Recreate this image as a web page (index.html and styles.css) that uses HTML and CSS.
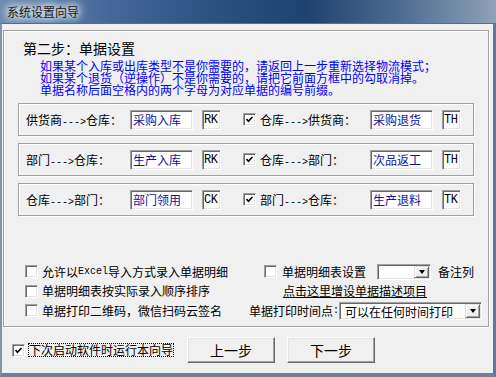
FILE: index.html
```html
<!DOCTYPE html>
<html lang="zh-CN">
<head>
<meta charset="UTF-8" />
<title>系统设置向导</title>
<link rel="stylesheet" href="styles.css">
</head>
<body>
  <div class="window">
    <div class="titlebar"><span class="title">系统设置向导</span></div>
    <div class="client">
      <div class="group main">
        <div class="step">第二步：单据设置</div>
        <div class="notes">
          <div>如果某个入库或出库类型不是你需要的，请返回上一步重新选择物流模式；</div>
          <div>如果某个退货（逆操作）不是你需要的，请把它前面方框中的勾取消掉。</div>
          <div>单据名称后面空格内的两个字母为对应单据的编号前缀。</div>
        </div>

        <div class="rows">
          <div class="group row">
            <span class="lbl">供货商<span class="arrow">---&gt;</span>仓库：</span>
            <span class="field">采购入库</span>
            <span class="code">RK</span>
            <span class="check on"><svg viewBox="0 0 13 13"><polyline points="3,6 5.2,8.6 10,3.6" /></svg></span>
            <span class="lbl lbl-r">仓库<span class="arrow">---&gt;</span>供货商：</span>
            <span class="field">采购退货</span>
            <span class="code">TH</span>
          </div>
          <div class="group row">
            <span class="lbl">部门<span class="arrow">---&gt;</span>仓库：</span>
            <span class="field">生产入库</span>
            <span class="code">RK</span>
            <span class="check on"><svg viewBox="0 0 13 13"><polyline points="3,6 5.2,8.6 10,3.6" /></svg></span>
            <span class="lbl lbl-r">仓库<span class="arrow">---&gt;</span>部门：</span>
            <span class="field">次品返工</span>
            <span class="code">TH</span>
          </div>
          <div class="group row">
            <span class="lbl">仓库<span class="arrow">---&gt;</span>部门：</span>
            <span class="field">部门领用</span>
            <span class="code">CK</span>
            <span class="check on"><svg viewBox="0 0 13 13"><polyline points="3,6 5.2,8.6 10,3.6" /></svg></span>
            <span class="lbl lbl-r">部门<span class="arrow">---&gt;</span>仓库：</span>
            <span class="field">生产退料</span>
            <span class="code">TK</span>
          </div>
        </div>

        <div class="options">
          <div class="opt"><span class="check"></span>允许以<span class="latin">Excel</span>导入方式录入单据明细</div>
          <div class="opt opt-detail">
            <span class="check"></span>单据明细表设置
            <span class="combo combo-sm"><span class="combo-text"></span><span class="drop"></span></span>
            备注列
          </div>
          <div class="opt"><span class="check"></span>单据明细表按实际录入顺序排序</div>
          <div class="opt opt-link"><a class="link">点击这里增设单据描述项目</a></div>
          <div class="opt"><span class="check"></span>单据打印二维码，微信扫码云签名</div>
          <div class="opt opt-print">
            单据打印时间点<span class="colon">:</span>
            <span class="combo combo-lg"><span class="combo-text">可以在任何时间打印</span><span class="drop"></span></span>
          </div>
        </div>
      </div>

      <div class="footer">
        <span class="check on"><svg viewBox="0 0 13 13"><polyline points="3,6 5.2,8.6 10,3.6" /></svg></span>
        <span class="focus">下次启动软件时运行本向导</span>
        <button class="btn btn-prev">上一步</button>
        <button class="btn">下一步</button>
      </div>
    </div>
  </div>
</body>
</html>
```

FILE: styles.css
```css
* {
  box-sizing: border-box;
}

body {
  margin: 0;
  background: #f0f0f0;
  font-family: "Noto Sans CJK SC", sans-serif;
  font-size: 12px;
  color: #000;
}

.window {
  width: 496px;
  height: 377px;
  display: flex;
  flex-direction: column;
}

/* Заголовок окна в стиле Win7 basic */
.titlebar {
  height: 23px;
  padding-left: 7px;
  display: flex;
  align-items: center;
  background: linear-gradient(90deg, #6f8cae 0%, #45689a 22%, #2a4f7e 45%, #1f436f 62%, #4b6a90 80%, #8ea1b7 100%);
}
.title {
  font-size: 12px;
  line-height: 14px;
  color: #161616;
  text-shadow:
    0 0 6px #e4ebf2,
    0 0 8px #e4ebf2,
    0 0 10px #dfe7ef,
    0 0 12px #dfe7ef;
}

.client {
  flex: 1;
  background: #f0f0f0;
  border-top: 1px solid #5c6d80;
  border-left: 2px solid #8193aa;
  border-right: 3px solid #5f7898;
  border-bottom: 4px solid #6a82a0;
}

/* Рамка group box */
.group {
  border: 1px solid #a0a0a0;
  box-shadow: inset 1px 1px #fff, 1px 1px #fff;
}

.main {
  width: 486px;
  height: 297px;
  margin: 6px 0 0 1px;
  padding: 9px 0 0 14px;
}

.step {
  font-size: 14px;
  line-height: 16px;
  padding-left: 5px;
}

.notes {
  margin-top: 4px;
  padding-left: 22px;
  color: #0000ff;
  line-height: 12px;
}

.rows {
  margin-top: 7px;
  width: 456px;
  display: flex;
  flex-direction: column;
  gap: 7px;
}
.row {
  height: 33px;
  padding-left: 7px;
  display: flex;
  align-items: center;
}
.lbl {
  width: 104px;
  white-space: nowrap;
}
.lbl-r {
  width: 110px;
}
.arrow, .latin, .colon {
  font-family: "Liberation Mono", monospace;
  font-size: 10px;
}

.field {
  width: 63px;
  height: 20px;
  padding-left: 2px;
  line-height: 17px;
  background: #fff;
  color: #12129a;
  border: 1px solid;
  border-color: #a0a0a0 #fff #fff #a0a0a0;
  box-shadow: inset 1px 1px #696969, inset -1px -1px #e3e3e3;
}
.code {
  width: 19px;
  height: 20px;
  margin-left: 9px;
  padding-left: 1px;
  line-height: 18px;
  font-family: "Liberation Mono", monospace;
  font-size: 12px;
  letter-spacing: -0.5px;
  background: #fff;
  border: 1px solid;
  border-color: #a0a0a0 #fff #fff #a0a0a0;
  box-shadow: inset 1px 1px #696969, inset -1px -1px #e3e3e3;
}

/* Чекбокс */
.check {
  flex-shrink: 0;
  display: inline-block;
  width: 13px;
  height: 13px;
  background: #fff;
  border: 1px solid;
  border-color: #a0a0a0 #fff #fff #a0a0a0;
  box-shadow: inset 1px 1px #696969, inset -1px -1px #e3e3e3;
}
.check svg {
  display: block;
  width: 11px;
  height: 11px;
}
.check polyline {
  fill: none;
  stroke: #000;
  stroke-width: 1.9;
}
.row .check {
  margin-left: 22px;
  margin-right: 4px;
}

.options {
  margin: 46px 0 0 7px;
  display: grid;
  grid-template-columns: 224px auto;
  grid-auto-rows: 19.5px;
  align-items: center;
}
.opt {
  display: flex;
  align-items: center;
  white-space: nowrap;
  line-height: 14px;
}
.opt .check {
  margin-right: 4px;
}
.opt-detail {
  padding-left: 15px;
}
.opt-detail .check {
  margin-right: 5px;
}
.opt-link {
  padding-left: 34px;
}
.link {
  color: #000;
  text-decoration: underline;
}

.combo {
  display: flex;
  background: #fff;
  border: 1px solid;
  border-color: #a0a0a0 #fff #fff #a0a0a0;
  box-shadow: inset 1px 1px #696969, inset -1px -1px #e3e3e3;
  padding: 1px;
}
.combo-text {
  flex: 1;
  padding-left: 4px;
  line-height: 15px;
}
.combo-sm {
  width: 54px;
  height: 16px;
  margin: 0 7px 0 11px;
}
.combo-lg {
  width: 143px;
  height: 18px;
}
.drop {
  width: 15px;
  background: #f0f0f0;
  border: 1px solid;
  border-color: #e3e3e3 #696969 #696969 #e3e3e3;
  box-shadow: inset 1px 1px #fff, inset -1px -1px #a0a0a0;
  display: flex;
  align-items: center;
  justify-content: center;
}
.drop::after {
  content: "";
  border-left: 3.5px solid transparent;
  border-right: 3.5px solid transparent;
  border-top: 4px solid #000;
}

.footer {
  height: 26px;
  margin-top: 10px;
  padding-left: 10px;
  display: flex;
  align-items: center;
}
.focus {
  margin-left: 3px;
  border: 1px dotted #000;
  line-height: 12px;
  white-space: nowrap;
}
.btn {
  width: 88px;
  height: 26px;
  margin-left: 12px;
  padding: 0;
  font-family: "Noto Sans CJK SC", sans-serif;
  font-size: 14px;
  background: #f0f0f0;
  color: #000;
  border: 1px solid;
  border-color: #fff #696969 #696969 #fff;
  box-shadow: inset -1px -1px #a0a0a0, inset 1px 1px #e3e3e3;
}
.btn-prev {
  margin-left: 13px;
}
```
